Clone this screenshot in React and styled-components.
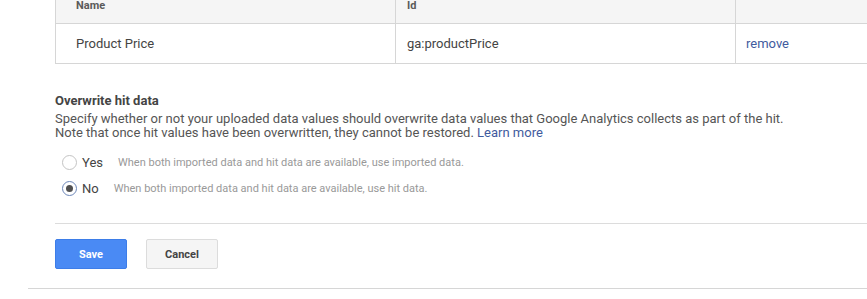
import React from "react";
import styled, { createGlobalStyle } from "styled-components";

const Global = createGlobalStyle`
  html, body { margin: 0; padding: 0; background: #fff; overflow: hidden; }
  body { font-family: Roboto, "Liberation Sans", Arial, sans-serif; }
`;

const Page = styled.div`
  width: 867px;
  height: 299px;
  overflow: hidden;
  display: flex;
  flex-direction: column;
`;

const Inner = styled.div`
  padding-left: 55px;
  display: flex;
  flex-direction: column;
`;

const Table = styled.div`
  width: 830px;
  border-left: 1px solid #d6d6d6;
  border-bottom: 1px solid #d6d6d6;
`;

const Row = styled.div`
  display: grid;
  grid-template-columns: 340px 340px 1fr;
  background: ${(p) => (p.$head ? "#f5f5f5" : "#fff")};
  border-bottom: ${(p) => (p.$head ? "1px solid #d6d6d6" : "none")};
`;

const Cell = styled.div`
  box-sizing: border-box;
  border-right: 1px solid #d6d6d6;
  padding: ${(p) => (p.$head ? "0 0 11px" : "0")} ${(p) => p.$pl || 20}px;
  height: ${(p) => (p.$head ? 23 : 39)}px;
  display: flex;
  align-items: ${(p) => (p.$head ? "flex-start" : "center")};
  font-size: ${(p) => (p.$head ? 11 : 13)}px;
  font-weight: ${(p) => (p.$head ? 700 : 400)};
  color: ${(p) => (p.$head ? "#5a5a5a" : "#444")};
  line-height: 12px;
`;

const RemoveLink = styled.a`
  color: #3f5b9e;
  text-decoration: none;
  font-size: 13px;
`;

const Heading = styled.div`
  margin-top: 29px;
  font-size: 13px;
  font-weight: 700;
  color: #444;
  line-height: 16px;
`;

const Desc = styled.p`
  margin: 3px 0 0;
  font-size: 13px;
  line-height: 14px;
  color: #555;
`;

const Learn = styled.a`
  color: #3f5b9e;
  text-decoration: none;
`;

const Radios = styled.div`
  margin-top: 9px;
  display: flex;
  flex-direction: column;
`;

const RadioRow = styled.label`
  height: 26px;
  display: flex;
  align-items: center;
  padding-left: 7px;
`;

const Circle = styled.span`
  box-sizing: border-box;
  width: 15px;
  height: 15px;
  border-radius: 50%;
  border: 1px solid ${(p) => (p.$on ? "#6d87b8" : "#c4c4c4")};
  display: flex;
  align-items: center;
  justify-content: center;
  background: #fff;
  &::after {
    content: "";
    display: ${(p) => (p.$on ? "block" : "none")};
    width: 7px;
    height: 7px;
    border-radius: 50%;
    background: #505050;
  }
`;

const RadioLabel = styled.span`
  margin-left: 5px;
  font-size: 13px;
  color: #444;
`;

const Hint = styled.span`
  margin-left: 15px;
  font-size: 11px;
  color: #999;
`;

const Separator = styled.div`
  margin-top: 22px;
  height: 1px;
  background: #dcdcdc;
  width: 812px;
`;

const Buttons = styled.div`
  margin-top: 15px;
  display: flex;
  gap: 19px;
`;

const Button = styled.button`
  box-sizing: border-box;
  width: 72px;
  height: 30px;
  border-radius: 2px;
  font-family: Roboto, "Liberation Sans", Arial, sans-serif;
  font-size: 11px;
  font-weight: 700;
  cursor: pointer;
  background: ${(p) => (p.$primary ? "#4a8af4" : "#f5f5f5")};
  border: 1px solid ${(p) => (p.$primary ? "#3d7de8" : "#dcdcdc")};
  color: ${(p) => (p.$primary ? "#fff" : "#444")};
  padding: 0;
`;

const BottomLine = styled.div`
  margin: 19px 0 0 28px;
  height: 1px;
  background: #d6d6d6;
`;

export default function App() {
  return (
    <Page>
      <Global />
      <Inner>
        <Table>
          <Row $head>
            <Cell $head>Name</Cell>
            <Cell $head $pl={11}>Id</Cell>
            <Cell $head></Cell>
          </Row>
          <Row>
            <Cell>Product Price</Cell>
            <Cell $pl={11}>ga:productPrice</Cell>
            <Cell $pl={10}>
              <RemoveLink href="#">remove</RemoveLink>
            </Cell>
          </Row>
        </Table>
        <Heading>Overwrite hit data</Heading>
        <Desc>
          Specify whether or not your uploaded data values should overwrite data values that Google Analytics collects as part of the hit.
          <br />
          Note that once hit values have been overwritten, they cannot be restored. <Learn href="#">Learn more</Learn>
        </Desc>
        <Radios>
          <RadioRow>
            <Circle />
            <RadioLabel>Yes</RadioLabel>
            <Hint>When both imported data and hit data are available, use imported data.</Hint>
          </RadioRow>
          <RadioRow>
            <Circle $on />
            <RadioLabel>No</RadioLabel>
            <Hint>When both imported data and hit data are available, use hit data.</Hint>
          </RadioRow>
        </Radios>
        <Separator />
        <Buttons>
          <Button $primary>Save</Button>
          <Button>Cancel</Button>
        </Buttons>
      </Inner>
      <BottomLine />
    </Page>
  );
}
